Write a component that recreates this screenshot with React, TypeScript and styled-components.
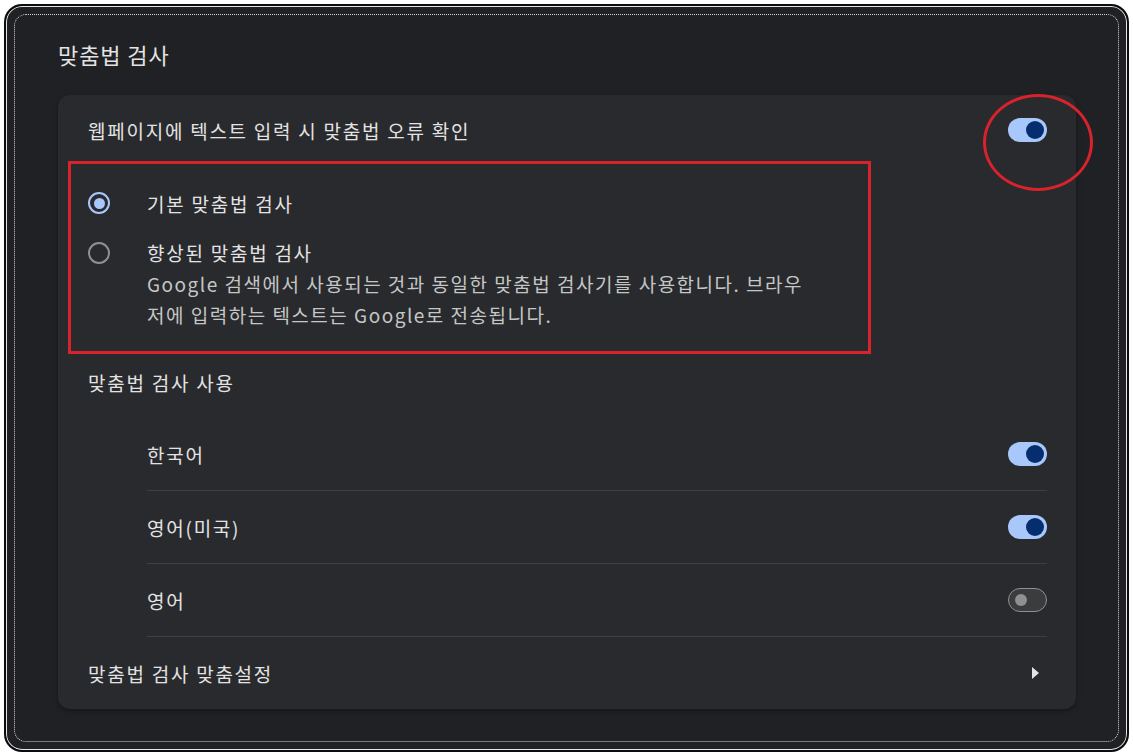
import React from "react";
import styled, { createGlobalStyle } from "styled-components";

const Global = createGlobalStyle`
  html, body {
    margin: 0;
    padding: 0;
    background: #ffffff;
  }
  body {
    font-family: "Noto Sans CJK KR", "Noto Sans", sans-serif;
    color: #e3e3e3;
  }
`;

const Frame = styled.div`
  box-sizing: border-box;
  margin: 4px;
  width: 1125px;
  height: 748px;
  border: 2px solid #0c0c0d;
  border-radius: 18px;
  background: #202124;
  box-shadow: inset 0 0 0 1px #e6e6e6;
  display: flex;
`;

const Inner = styled.div`
  flex: 1;
  margin: 8px;
  border: 1px dotted #d8d8d8;
  border-radius: 12px;
  padding: 24px 42px 0 43px;
`;

const Title = styled.div`
  font-size: 22px;
  letter-spacing: 0.9px;
  line-height: 30px;
  margin-bottom: 26px;
`;

const Card = styled.div`
  position: relative;
  background: #292a2d;
  border-radius: 12px;
  padding: 0 29px 0 30px;
  box-shadow: 0 2px 5px rgba(0, 0, 0, 0.35);
  font-size: 19px;
  letter-spacing: 1.75px;
`;

const Row = styled.div<{ $h?: number; $line?: boolean }>`
  display: flex;
  align-items: center;
  justify-content: space-between;
  height: ${(p) => p.$h ?? 72}px;
  ${(p) => p.$line && "border-bottom: 1px solid #3e3f42;"}
`;

const ItemRow = styled(Row)`
  margin-left: 59px;
`;

const Toggle = styled.div<{ $on?: boolean }>`
  box-sizing: border-box;
  width: 39px;
  height: 24px;
  border-radius: 12px;
  display: flex;
  align-items: center;
  justify-content: ${(p) => (p.$on ? "flex-end" : "flex-start")};
  padding: 0 ${(p) => (p.$on ? 3 : 6)}px;
  background: ${(p) => (p.$on ? "#a8c7fa" : "#3b3c3e")};
  border: ${(p) => (p.$on ? "none" : "1.5px solid #8e918f")};
  &::after {
    content: "";
    width: ${(p) => (p.$on ? 18 : 12)}px;
    height: ${(p) => (p.$on ? 18 : 12)}px;
    border-radius: 50%;
    background: ${(p) => (p.$on ? "#062e6f" : "#8e918f")};
  }
`;

const RadioGroup = styled.div`
  padding: 13px 0 27px;
`;

const RadioRow = styled.div<{ $top?: boolean }>`
  display: flex;
  align-items: ${(p) => (p.$top ? "flex-start" : "center")};
  min-height: 50px;
  margin-top: ${(p) => (p.$top ? 9 : 0)}px;
`;

const RadioMark = styled.div<{ $checked?: boolean }>`
  box-sizing: border-box;
  flex: none;
  width: 22px;
  height: 22px;
  margin: ${(p) => (p.$checked ? "0" : "4.5px 0 0")};
  border-radius: 50%;
  border: 2px solid ${(p) => (p.$checked ? "#a8c7fa" : "#8e918f")};
  display: flex;
  align-items: center;
  justify-content: center;
  &::after {
    content: "";
    display: ${(p) => (p.$checked ? "block" : "none")};
    width: 11px;
    height: 11px;
    border-radius: 50%;
    background: #a8c7fa;
  }
`;

const RadioText = styled.div`
  margin-left: 37px;
  line-height: 31px;
`;

const Secondary = styled.div`
  color: #c4c7c5;
  white-space: nowrap;
  letter-spacing: 1.5px;
`;

const Header = styled.div`
  height: 50px;
  display: flex;
  align-items: center;
  margin-bottom: 11px;
`;

const Arrow = styled.div`
  width: 0;
  height: 0;
  margin-right: 8px;
  border-left: 7px solid #e3e3e3;
  border-top: 6.5px solid transparent;
  border-bottom: 6.5px solid transparent;
`;

const MarkBox = styled.div`
  position: absolute;
  left: 10px;
  top: 66px;
  width: 803px;
  height: 193px;
  box-sizing: border-box;
  border: 3px solid #d8232c;
  pointer-events: none;
`;

const MarkEllipse = styled.div`
  position: absolute;
  left: 925px;
  top: -1px;
  width: 110px;
  height: 97px;
  box-sizing: border-box;
  border: 3px solid #d8232c;
  border-radius: 50%;
  pointer-events: none;
`;

const languages = [
  { name: "한국어", on: true },
  { name: "영어(미국)", on: true },
  { name: "영어", on: false },
];

export default function App() {
  return (
    <>
      <Global />
      <Frame>
        <Inner>
          <Title>맞춤법 검사</Title>
          <Card>
            <Row $h={70}>
              <span>웹페이지에 텍스트 입력 시 맞춤법 오류 확인</span>
              <Toggle $on />
            </Row>
            <RadioGroup>
              <RadioRow>
                <RadioMark $checked />
                <RadioText>기본 맞춤법 검사</RadioText>
              </RadioRow>
              <RadioRow $top>
                <RadioMark />
                <RadioText>
                  <div>향상된 맞춤법 검사</div>
                  <Secondary>
                    Google 검색에서 사용되는 것과 동일한 맞춤법 검사기를 사용합니다. 브라우
                    <br />
                    저에 입력하는 텍스트는 Google로 전송됩니다.
                  </Secondary>
                </RadioText>
              </RadioRow>
            </RadioGroup>
            <Header>맞춤법 검사 사용</Header>
            {languages.map((l) => (
              <ItemRow key={l.name} $line>
                <span>{l.name}</span>
                <Toggle $on={l.on} />
              </ItemRow>
            ))}
            <Row>
              <span>맞춤법 검사 맞춤설정</span>
              <Arrow />
            </Row>
            <MarkBox />
            <MarkEllipse />
          </Card>
        </Inner>
      </Frame>
    </>
  );
}
